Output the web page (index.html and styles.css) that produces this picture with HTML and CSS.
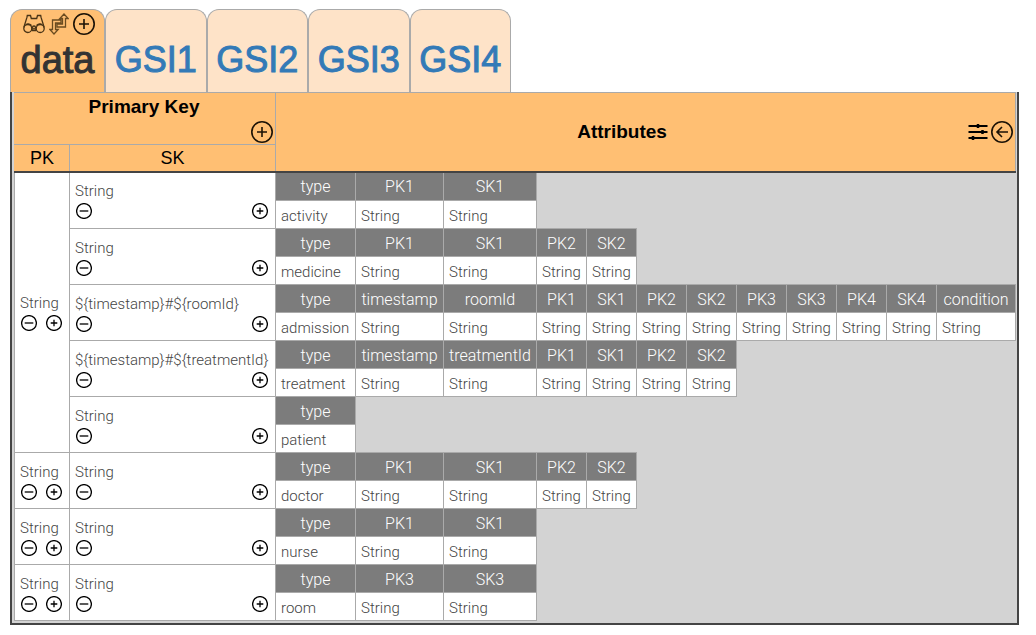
FILE: index.html
```
<!DOCTYPE html>
<html lang="en">
<head>
<meta charset="utf-8">
<title>Table model</title>
<link rel="stylesheet" href="styles.css">
</head>
<body>
<svg class="sprite" aria-hidden="true">
  <symbol id="plus" viewBox="0 0 16 16"><circle cx="8" cy="8" r="7.4"/><path d="M4.7 8h6.6M8 4.7v6.6"/></symbol>
  <symbol id="minus" viewBox="0 0 16 16"><circle cx="8" cy="8" r="7.4"/><path d="M3.7 8h8.6"/></symbol>
  <symbol id="add" viewBox="0 0 22 22"><circle cx="11" cy="11" r="10.2"/><path d="M6 11h10M11 6v10"/></symbol>
  <symbol id="back" viewBox="0 0 22 22"><circle cx="11" cy="11" r="10.2"/><path d="M17 11H6M11 6l-5 5 5 5"/></symbol>
  <symbol id="sliders" viewBox="0 0 20 16"><path d="M.5 2h19M.5 8h19M.5 14h19" stroke-width="2"/><path d="M10 0v4M14.500 6v4M5 12v4" stroke-width="2.500"/></symbol>
  <symbol id="find" viewBox="0 0 22 20"><circle cx="4.800" cy="14.500" r="4"/><circle cx="17.200" cy="14.500" r="4"/><circle cx="11" cy="13.500" r="1.500"/><path d="M.8 13.500 4 3.200 4.300 1.500H7.500L8.300 4.500H13.700L14.500 1.500H17.700L18 3.200l3.200 10.300M8.800 14.500 9.500 16.500h3l.7-2M3 10.500Q6 9 8.500 11.500M19 10.500Q16 9 13.500 11.500"/></symbol>
  <symbol id="swap" viewBox="0 0 20 22"><path d="M15 1 10.800 5.500H13.500V11H8V14H16.500V5.500H19.200zM5 21 .8 16.500H3.500V7H12V10H6.500V16.500H9.200z"/></symbol>
</svg>

<nav class="tabs" aria-label="Indexes">
  <div class="tab tab-active">
    <div class="tab-tools">
      <button type="button" aria-label="Query"><svg class="icon-find"><use href="#find"/></svg></button>
      <button type="button" aria-label="Swap"><svg class="icon-swap"><use href="#swap"/></svg></button>
      <button type="button" aria-label="Add index"><svg class="icon-large"><use href="#add"/></svg></button>
    </div>
    <a class="tab-label" aria-current="page">data</a>
  </div>
  <div class="tab"><a class="tab-label" href="#gsi1">GSI1</a></div>
  <div class="tab"><a class="tab-label" href="#gsi2">GSI2</a></div>
  <div class="tab"><a class="tab-label" href="#gsi3">GSI3</a></div>
  <div class="tab"><a class="tab-label" href="#gsi4">GSI4</a></div>
</nav>

<main class="model">
<table class="grid">
  <colgroup>
    <col class="c-pk"><col class="c-sk"><col class="c-type"><col class="c-first"><col class="c-second">
    <col span="8" class="c-key"><col class="c-last">
  </colgroup>
  <thead>
    <tr class="head-main">
      <th colspan="2" class="primary"><div class="primary-box"><span>Primary Key</span><button type="button" aria-label="Add item"><svg class="icon-large"><use href="#add"/></svg></button></div></th>
      <th colspan="12" rowspan="2" class="attributes"><div class="attributes-box"><span class="attributes-title">Attributes</span><span class="attributes-tools"><button type="button" aria-label="Settings"><svg class="icon-sliders"><use href="#sliders"/></svg></button><button type="button" aria-label="Back"><svg class="icon-large"><use href="#back"/></svg></button></span></div></th>
    </tr>
    <tr class="head-sub"><th class="primary">PK</th><th>SK</th></tr>
  </thead>
  <tbody>
    <tr>
      <td class="key" rowspan="10">String<div class="actions"><button type="button" aria-label="Remove"><svg class="icon-small"><use href="#minus"/></svg></button><button type="button" aria-label="Add"><svg class="icon-small"><use href="#plus"/></svg></button></div></td>
      <td class="key" rowspan="2">String<div class="actions"><button type="button" aria-label="Remove"><svg class="icon-small"><use href="#minus"/></svg></button><button type="button" aria-label="Add"><svg class="icon-small"><use href="#plus"/></svg></button></div></td>
      <th>type</th><th>PK1</th><th>SK1</th><td class="blank" colspan="9" rowspan="2"></td>
    </tr>
    <tr><td>activity</td><td>String</td><td>String</td></tr>
    <tr>
      <td class="key" rowspan="2">String<div class="actions"><button type="button" aria-label="Remove"><svg class="icon-small"><use href="#minus"/></svg></button><button type="button" aria-label="Add"><svg class="icon-small"><use href="#plus"/></svg></button></div></td>
      <th>type</th><th>PK1</th><th>SK1</th><th>PK2</th><th>SK2</th><td class="blank" colspan="7" rowspan="2"></td>
    </tr>
    <tr><td>medicine</td><td>String</td><td>String</td><td>String</td><td>String</td></tr>
    <tr>
      <td class="key" rowspan="2">${timestamp}#${roomId}<div class="actions"><button type="button" aria-label="Remove"><svg class="icon-small"><use href="#minus"/></svg></button><button type="button" aria-label="Add"><svg class="icon-small"><use href="#plus"/></svg></button></div></td>
      <th>type</th><th>timestamp</th><th>roomId</th><th>PK1</th><th>SK1</th><th>PK2</th><th>SK2</th><th>PK3</th><th>SK3</th><th>PK4</th><th>SK4</th><th>condition</th>
    </tr>
    <tr><td>admission</td><td>String</td><td>String</td><td>String</td><td>String</td><td>String</td><td>String</td><td>String</td><td>String</td><td>String</td><td>String</td><td>String</td></tr>
    <tr>
      <td class="key" rowspan="2">${timestamp}#${treatmentId}<div class="actions"><button type="button" aria-label="Remove"><svg class="icon-small"><use href="#minus"/></svg></button><button type="button" aria-label="Add"><svg class="icon-small"><use href="#plus"/></svg></button></div></td>
      <th>type</th><th>timestamp</th><th>treatmentId</th><th>PK1</th><th>SK1</th><th>PK2</th><th>SK2</th><td class="blank" colspan="5" rowspan="2"></td>
    </tr>
    <tr><td>treatment</td><td>String</td><td>String</td><td>String</td><td>String</td><td>String</td><td>String</td></tr>
    <tr>
      <td class="key" rowspan="2">String<div class="actions"><button type="button" aria-label="Remove"><svg class="icon-small"><use href="#minus"/></svg></button><button type="button" aria-label="Add"><svg class="icon-small"><use href="#plus"/></svg></button></div></td>
      <th>type</th><td class="blank" colspan="11" rowspan="2"></td>
    </tr>
    <tr><td>patient</td></tr>
    <tr>
      <td class="key" rowspan="2">String<div class="actions"><button type="button" aria-label="Remove"><svg class="icon-small"><use href="#minus"/></svg></button><button type="button" aria-label="Add"><svg class="icon-small"><use href="#plus"/></svg></button></div></td>
      <td class="key" rowspan="2">String<div class="actions"><button type="button" aria-label="Remove"><svg class="icon-small"><use href="#minus"/></svg></button><button type="button" aria-label="Add"><svg class="icon-small"><use href="#plus"/></svg></button></div></td>
      <th>type</th><th>PK1</th><th>SK1</th><th>PK2</th><th>SK2</th><td class="blank" colspan="7" rowspan="2"></td>
    </tr>
    <tr><td>doctor</td><td>String</td><td>String</td><td>String</td><td>String</td></tr>
    <tr>
      <td class="key" rowspan="2">String<div class="actions"><button type="button" aria-label="Remove"><svg class="icon-small"><use href="#minus"/></svg></button><button type="button" aria-label="Add"><svg class="icon-small"><use href="#plus"/></svg></button></div></td>
      <td class="key" rowspan="2">String<div class="actions"><button type="button" aria-label="Remove"><svg class="icon-small"><use href="#minus"/></svg></button><button type="button" aria-label="Add"><svg class="icon-small"><use href="#plus"/></svg></button></div></td>
      <th>type</th><th>PK1</th><th>SK1</th><td class="blank" colspan="9" rowspan="2"></td>
    </tr>
    <tr><td>nurse</td><td>String</td><td>String</td></tr>
    <tr>
      <td class="key" rowspan="2">String<div class="actions"><button type="button" aria-label="Remove"><svg class="icon-small"><use href="#minus"/></svg></button><button type="button" aria-label="Add"><svg class="icon-small"><use href="#plus"/></svg></button></div></td>
      <td class="key" rowspan="2">String<div class="actions"><button type="button" aria-label="Remove"><svg class="icon-small"><use href="#minus"/></svg></button><button type="button" aria-label="Add"><svg class="icon-small"><use href="#plus"/></svg></button></div></td>
      <th>type</th><th>PK3</th><th>SK3</th><td class="blank" colspan="9" rowspan="2"></td>
    </tr>
    <tr><td>room</td><td>String</td><td>String</td></tr>
  </tbody>
</table>
</main>
</body>
</html>
```
FILE: styles.css
```
* { box-sizing: border-box; }

body {
  margin: 9px 17px 10px 10px;
  background: #fff;
  color: #333;
  font-family: "Liberation Sans", Arial, sans-serif;
}

.sprite { display: none; }

svg {
  display: block;
  fill: none;
  stroke: #000;
  stroke-width: 1.3;
}

button {
  display: block;
  margin: 0;
  padding: 0;
  border: 0;
  background: none;
  cursor: pointer;
}

.icon-small { width: 16px; height: 16px; }
.icon-large { width: 22px; height: 22px; stroke: #1c1206; stroke-width: 1.6; }
.icon-sliders { width: 20px; height: 16px; }
.icon-find { width: 22px; height: 20px; stroke: #4a3416; }
.icon-swap { width: 20px; height: 22px; stroke: #6b4c20; }

/* Index tabs */
.tabs {
  display: grid;
  grid-template-columns: 95px repeat(4, 1fr);
  width: 501px;
}

.tab {
  display: flex;
  flex-direction: column;
  justify-content: flex-end;
  align-items: center;
  height: 83px;
  padding: 3px 0 11px;
  border: 1px solid #aaa;
  border-bottom: 0;
  border-radius: 12px 12px 0 0;
  background: #fee3c8;
}

.tab-active {
  justify-content: space-between;
  background: #ffbf73;
}

.tab-tools {
  display: flex;
  align-items: center;
  gap: 4px;
  padding-left: 2px;
}

.tab-label {
  color: #337ab7;
  font-size: 36px;
  line-height: 42px;
  text-decoration: none;
  -webkit-text-stroke: 1px currentColor;
}

.tab-active .tab-label {
  color: #333;
  font-size: 38px;
}

/* Data model table */
.model {
  padding: 0 1px 2px 2px;
  border: solid #444;
  border-width: 0 2px 2px;
  background: #d3d3d3;
}

.grid {
  width: 100%;
  border-collapse: collapse;
  table-layout: fixed;
}

.c-pk { width: 55px; }
.c-sk { width: 206px; }
.c-type { width: 80px; }
.c-first { width: 88px; }
.c-second { width: 93px; }
.c-key { width: 50px; }
.c-last { width: 79px; }

thead th {
  padding: 0;
  border: 1px solid #aaa;
  background: #ffbf73;
  color: #000;
  font-size: 18px;
  line-height: 24px;
}

thead .primary { border-left-color: #ffbf73; }
.head-main { height: 52px; }
.head-main th { font-size: 19px; }
.head-sub { height: 27px; }
.head-sub th { font-weight: 400; }
.head-sub th, thead .attributes { border-bottom: 2px solid #444; }

.primary-box {
  display: flex;
  flex-direction: column;
  align-items: center;
  gap: 2px;
  padding-right: 2px;
}

.primary-box button { align-self: flex-end; }

.attributes-box {
  display: flex;
  align-items: center;
  padding-right: 2px;
}

.attributes-title { flex: 1; }

.attributes-tools {
  display: flex;
  align-items: center;
  gap: 3px;
}

tbody tr { height: 28px; }
tbody tr:first-child { height: 29px; }

tbody td,
tbody th {
  padding: 2px 5px 0;
  border: 1px solid #aaa;
  background: #fff;
  color: #444;
  font-family: Roboto, "Liberation Sans", sans-serif;
  font-size: 15px;
  font-weight: 300;
  line-height: 22px;
  text-align: left;
  white-space: nowrap;
}

tbody th {
  padding: 2px 0 0;
  background: #7c7c7c;
  color: #fff;
  font-size: 16px;
  text-align: center;
}

tbody .key {
  padding: 0 7px 0 5px;
  line-height: 20px;
}

tbody .blank {
  padding: 0;
  border: 0;
  background: none;
}

.actions {
  display: flex;
  justify-content: space-between;
  padding: 2px 0 0 1px;
}
```
